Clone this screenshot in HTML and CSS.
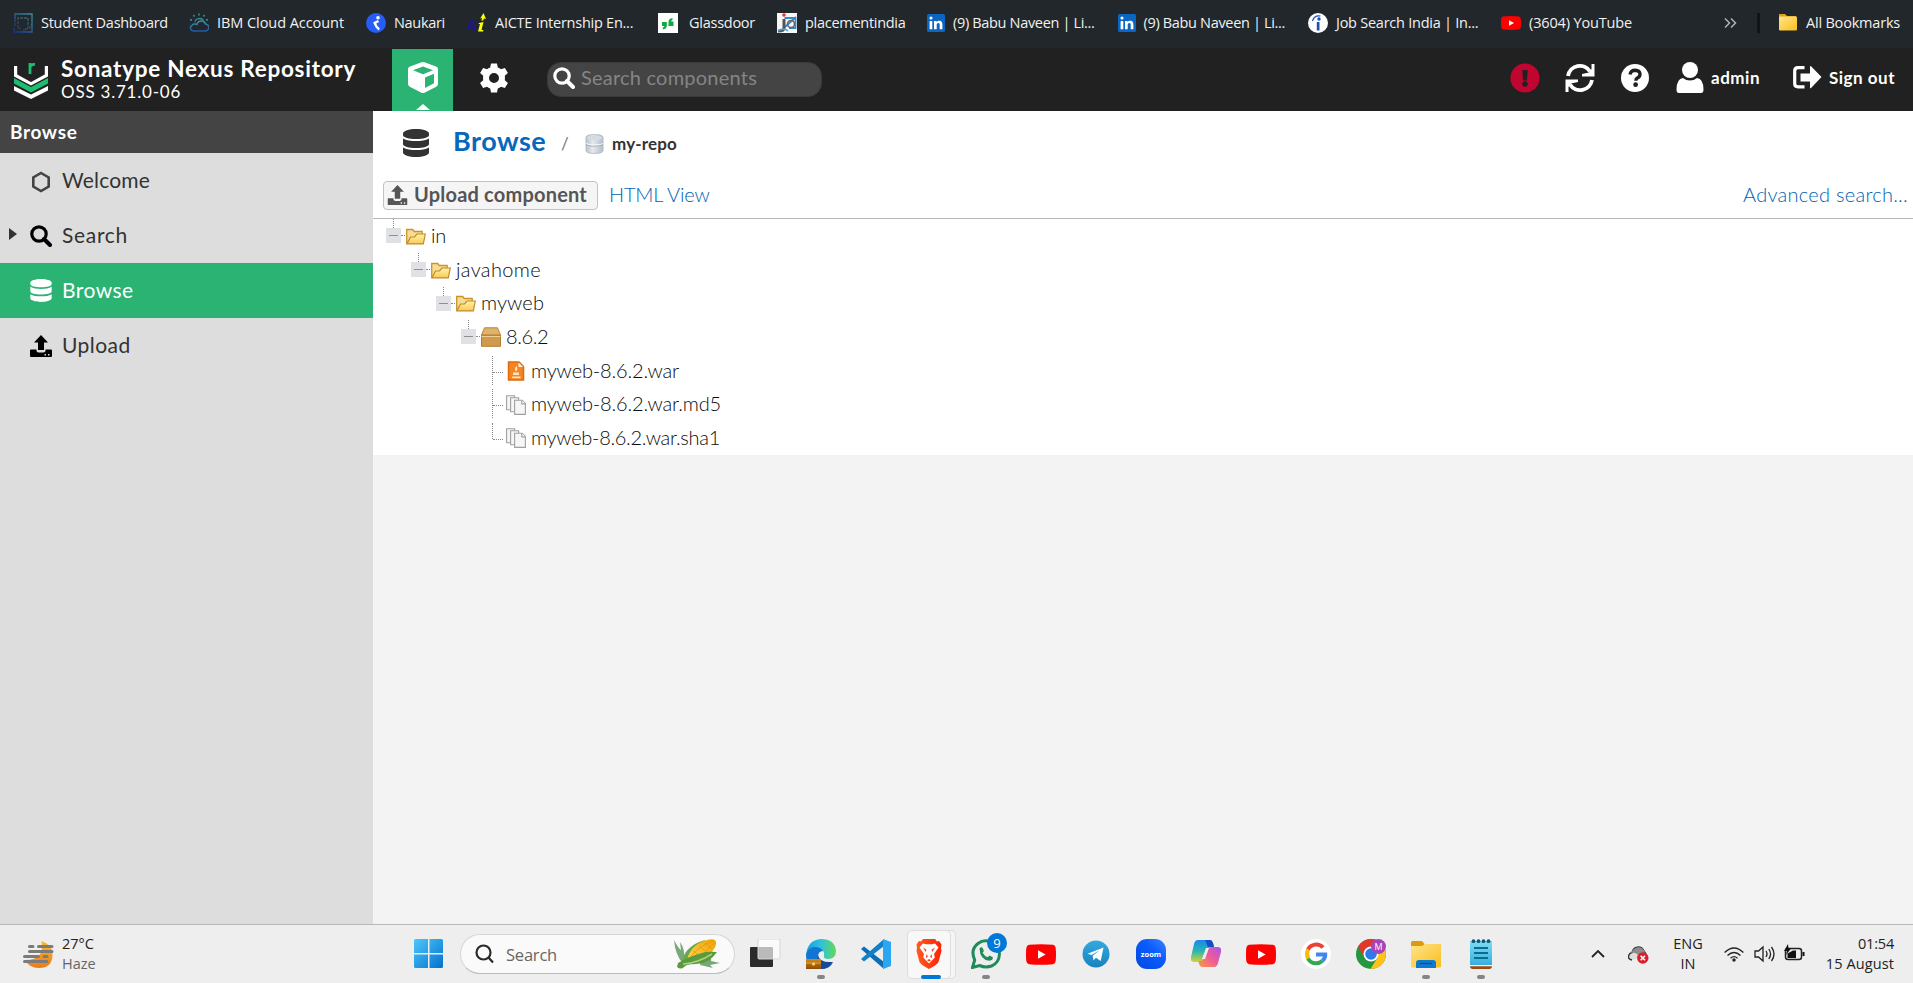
FILE: index.html
```html
<!DOCTYPE html>
<html lang="en">
<head>
<meta charset="utf-8">
<title>Browse - Sonatype Nexus Repository</title>
<link rel="stylesheet" href="styles.css">
</head>
<body>
<svg width="0" height="0" class="defs">
  <defs>
    <linearGradient id="gWin" x1="0" y1="0" x2="1" y2="1"><stop offset="0" stop-color="#4cc9fb"/><stop offset="1" stop-color="#0370ce"/></linearGradient>
    <linearGradient id="gFold" x1="0" y1="0" x2="1" y2="1"><stop offset="0" stop-color="#ffe58c"/><stop offset="1" stop-color="#f9bd1c"/></linearGradient>
    <linearGradient id="gSun" x1="0" y1="0" x2="0" y2="1"><stop offset="0" stop-color="#f8bd32"/><stop offset="1" stop-color="#ee7a17"/></linearGradient>
    <linearGradient id="gTree" x1="0" y1="0" x2="0" y2="1"><stop offset="0" stop-color="#fff3a8"/><stop offset="1" stop-color="#f8cb55"/></linearGradient>
    <linearGradient id="gSilver" x1="0" y1="0" x2="1" y2="0"><stop offset="0" stop-color="#b9c2cc"/><stop offset=".4" stop-color="#e6eaef"/><stop offset="1" stop-color="#b3bdc8"/></linearGradient>
    <linearGradient id="gEdge" x1="0" y1="0" x2="1" y2="0"><stop offset="0" stop-color="#1b9de2"/><stop offset=".5" stop-color="#2fc2dc"/><stop offset="1" stop-color="#62d957"/></linearGradient>
    <linearGradient id="gBrave" x1="0" y1="0" x2="1" y2="0"><stop offset="0" stop-color="#ff5a1f"/><stop offset="1" stop-color="#fb2408"/></linearGradient>
    <linearGradient id="gTele" x1="0" y1="0" x2="0" y2="1"><stop offset="0" stop-color="#33a9e0"/><stop offset="1" stop-color="#1982bd"/></linearGradient>
    <linearGradient id="gZoom" x1="0" y1="1" x2="1" y2="0"><stop offset="0" stop-color="#0047e0"/><stop offset=".6" stop-color="#0b5cff"/><stop offset="1" stop-color="#3c82ff"/></linearGradient>
    <linearGradient id="gCopA" x1="0" y1="0" x2="0" y2="1"><stop offset="0" stop-color="#1a86f0"/><stop offset=".5" stop-color="#27b7b0"/><stop offset="1" stop-color="#d8d330"/></linearGradient>
    <linearGradient id="gCopB" x1="1" y1="0" x2="0" y2="1"><stop offset="0" stop-color="#a957e8"/><stop offset=".5" stop-color="#ef5b98"/><stop offset="1" stop-color="#ff9a3c"/></linearGradient>
    <linearGradient id="gNote" x1="0" y1="0" x2="0" y2="1"><stop offset="0" stop-color="#7fdcf2"/><stop offset="1" stop-color="#38aede"/></linearGradient>
    <linearGradient id="gCorn" x1="0" y1="1" x2="1" y2="0"><stop offset="0" stop-color="#ffd95c"/><stop offset="1" stop-color="#f0a000"/></linearGradient>
    <linearGradient id="gStudent" x1="0" y1="1" x2="1" y2="0"><stop offset="0" stop-color="#1d2f8c"/><stop offset="1" stop-color="#3d8f96"/></linearGradient>
    <linearGradient id="gCloud" x1="0" y1="0" x2="0" y2="1"><stop offset="0" stop-color="#38949b"/><stop offset="1" stop-color="#2058b0"/></linearGradient>
    <linearGradient id="gCase" x1="0" y1="0" x2="0" y2="1"><stop offset="0" stop-color="#d18a22"/><stop offset="1" stop-color="#8d4a06"/></linearGradient>
  </defs>
  <symbol id="database" viewBox="0 0 26 28"><path d="M0 4.500C0 2 6 0 13 0s13 2 13 4.500v1.500c0 2.500-6 4-13 4S0 8.500 0 6z"/><path d="M0 9.500c3 2 8 2.600 13 2.600s10-.6 13-2.600V15c0 2.500-6 4-13 4S0 17.500 0 15z"/><path d="M0 18.500c3 2 8 2.600 13 2.600s10-.6 13-2.600v5c0 2.500-6 4.500-13 4.500S0 26 0 23.500z"/></symbol>
  <symbol id="magnifier" viewBox="0 0 22 22"><circle cx="9" cy="9" r="7.200" fill="none" stroke="currentColor" stroke-width="3.200"/><path d="M14 14l6 6" stroke="currentColor" stroke-width="4" stroke-linecap="round"/></symbol>
  <symbol id="upload" viewBox="0 0 22 22"><path d="M11 0l7 7.500h-4V15H8V7.500H4z"/><path fill-rule="evenodd" d="M0 15.500q0-1 1-1h5.500v1q0 2 2 2h5q2 0 2-2v-1H21q1 0 1 1V21q0 1-1 1H1q-1 0-1-1zM14.500 19v1.500H16V19zM18 19v1.500h1.500V19z"/></symbol>
  <symbol id="youtube" viewBox="0 0 30 21"><path fill="#f00" d="M3 .8Q15-.5 27 .8 29.300 1.300 29.700 4q.6 6.500 0 13-.4 2.700-2.700 3.200-12 1.300-24 0Q.7 19.700.3 17-.3 10.500.3 4 .7 1.300 3 .8z"/><path fill="#fff" d="M12 6.200l7.600 4.300L12 14.800z"/></symbol>
  <symbol id="linkedin" viewBox="0 0 18 18"><rect width="18" height="18" rx="1.500" fill="#0a66c2"/><path fill="#fff" d="M2.600 7h2.700v8.300H2.600zM4 2.500a1.550 1.550 0 1 1 0 3.100 1.550 1.550 0 0 1 0-3.100zM7 7h2.600v1.200C10.200 7.200 11.100 6.800 12.200 6.800c2.600 0 3.200 1.700 3.200 4v4.500h-2.700v-4c0-1 0-2.200-1.350-2.200S9.700 10.100 9.700 11.200v4.100H7z"/></symbol>
  <symbol id="folder-open" viewBox="0 0 20 17"><path d="M.7 15.500V1.500h6l1.500 2h8v4" fill="#f5dd95" stroke="#c99430" stroke-width="1.300"/><path d="M.9 15.900L4.500 9l4-.2L11 6h8.300l-2 9.900z" fill="url(#gTree)" stroke="#c48a2c" stroke-width="1.200"/></symbol>
  <symbol id="pages" viewBox="0 0 20 20"><g fill="#f6f6f6" stroke="#a0a0a0" stroke-width="1.100"><path d="M.6.8h8v14h-8z"/><path d="M4.600 2.800h8v14h-8z"/><path d="M8.600 5.300h7.600l3.200 3.200v10.900H8.600z"/><path d="M15.800 5.300v3.600h3.600" fill="#fff"/></g></symbol>
</svg>

<nav class="bookmarks">
  <a class="bm"><svg width="20" height="20" viewBox="0 0 20 20" fill="none" stroke="url(#gStudent)" stroke-width="1.300"><path d="M2 6V1h17v18H1v-4"/><path d="M2 6v7l-1 1M5 15V5h10v10M5 15l3 1M11 19v-3h5l3-5" stroke-dasharray="3 1" stroke-opacity=".7"/></svg><span class="w1">Student Dashboard</span></a>
  <a class="bm"><svg width="20" height="20" viewBox="0 0 20 20" fill="none" stroke="url(#gCloud)" stroke-width="1.500"><path d="M5 18h11a3.500 3.500 0 0 0 .5-7C15.500 7 9 6.500 8 11.500c-2-1-4.500-.5-5 1-2.500 1-2 5.500 2 5.500z"/><path d="M6 9.500c0-5 8-5 8.500-1"/><path d="M10 .5v2M4.500 2l1 1.500M1 6.500l2 .8M15.500 2l-1 1.500M19 6.500l-2 .8" stroke="#38949b"/></svg><span class="w2">IBM Cloud Account</span></a>
  <a class="bm"><svg width="20" height="20" viewBox="0 0 20 20"><circle cx="10" cy="10" r="10" fill="#275df5"/><circle cx="12" cy="4.700" r="1.800" fill="#fff"/><path d="M12.500 8L8.700 10q1.200 4 4.500 6.500" fill="none" stroke="#fff" stroke-width="2.500"/></svg><span class="w3">Naukari</span></a>
  <a class="bm"><svg width="20" height="20" viewBox="0 0 20 20"><path d="M0 18L4 8h2l2 10M2 14.500h5" stroke="#21178c" stroke-width="2" fill="none"/><path d="M16.500 0l2.500 6-2-.5-.7 2h-2l.9-2.500-2 .5zM12 10l4.500-1-2 8h2l-.5 1.500h-5l2-7.500h-1.500z" fill="#ff0"/></svg><span class="w4">AICTE Internship En...</span></a>
  <a class="bm wide"><svg width="20" height="20" viewBox="0 0 20 20"><path fill="#fff" d="M0 0h20v20H0z"/><path d="M4 9h4.800v3.500q0 3.500-4 4v-2q1.500-.3 1.500-1.500H4zM15.500 13h-5V9q0-3.500 4-4v2q-1.300.3-1.300 1.500h2.300z" fill="#0caa41"/></svg><span class="w5">Glassdoor</span></a>
  <a class="bm"><svg width="20" height="20" viewBox="0 0 20 20"><path fill="#f7f7f7" d="M0 0h20v20H0z"/><path d="M7.500 5h11v10H12M8 14L19 4" stroke="#318bd0" stroke-width="1.800" fill="none"/><path d="M7 6v9q0 3-6 3" stroke="#555" stroke-width="3" fill="none"/><path d="M1 18q6-4 10 0" stroke="#4ca2df" stroke-width="1.500" fill="none"/><circle cx="14" cy="11" r="3.500" fill="none" stroke="#666" stroke-width="1.600"/><circle cx="7" cy="2" r="1.800" fill="#e33"/></svg><span class="w6">placementindia</span></a>
  <a class="bm"><svg width="18" height="18"><use href="#linkedin"/></svg><span class="w7">(9) Babu Naveen | Li...</span></a>
  <a class="bm"><svg width="18" height="18"><use href="#linkedin"/></svg><span class="w7">(9) Babu Naveen | Li...</span></a>
  <a class="bm"><svg width="20" height="20" viewBox="0 0 20 20"><circle cx="10" cy="10" r="10" fill="#fff"/><path d="M8.800 9h2.700v8.500H8.800z" fill="#1f4fb4"/><circle cx="11" cy="6" r="1.700" fill="#1f4fb4"/><path d="M4.500 8Q6 2 12.500 3" fill="none" stroke="#1f4fb4" stroke-width="1.200"/></svg><span class="w9">Job Search India | In...</span></a>
  <a class="bm"><svg width="20" height="14"><use href="#youtube"/></svg><span class="w10">(3604) YouTube</span></a>
  <svg class="overflow" width="13" height="10" viewBox="0 0 13 10" fill="none" stroke="#aeb4b9" stroke-width="1.500"><path d="M1 .5L5.500 5 1 9.500M7 .5L11.500 5 7 9.500"/></svg>
  <i class="bm-sep"></i>
  <a class="bm last"><svg width="20" height="17" viewBox="0 0 20 17"><path d="M1 0h6l2 2h9v5H1z" fill="#dba21d"/><rect x="1" y="2.500" width="18" height="14" rx="1" fill="url(#gFold)"/></svg><span class="w11">All Bookmarks</span></a>
</nav>

<header class="top">
  <svg class="logo" width="34" height="37" viewBox="0 0 34 37"><path d="M1.600 4v9.500L17 21.800l15.400-8.300V4" fill="none" stroke="#fff" stroke-width="3.200"/><path d="M0 16l17 9 17-9v5.500l-17 9-17-9z" fill="#1bbd70"/><path d="M0 24l17 8.500L34 24v4.500L17 37 0 28.500z" fill="#fff"/><path d="M16 12V1M16 5q1-3 5-2.600" fill="none" stroke="#1bbd70" stroke-width="2.800"/></svg>
  <div class="brand"><b>Sonatype Nexus Repository</b><span>OSS 3.71.0-06</span></div>
  <a class="tab"><svg width="32" height="31" viewBox="0 0 32 31"><path fill-rule="evenodd" fill="#fff" d="M14.500.3q1.500-.6 3 0L29 4.500q2 .8 2 2.800v14.500q0 2-1.800 3L18 30.500q-2 1-4 0L2.800 24.800Q1 23.800 1 21.800V7.300q0-2 2-2.800zM6 8.200l10 4 10-4-10-3.700zM18 26l9-4.700v-9.600l-9 3.900z"/></svg><i></i></a>
  <svg class="gear" width="30" height="30" viewBox="0 0 30 30"><path fill="#fff" fill-rule="evenodd" d="M12 .5h6l.8 4q1.800.7 3.200 1.800l3.900-1.400 3 5.200-3.100 2.700q.3 2.200 0 4.400l3.100 2.700-3 5.200-3.900-1.400q-1.400 1.100-3.200 1.800l-.8 4h-6l-.8-4Q9.400 24.800 8 23.700l-3.900 1.400-3-5.200 3.100-2.700q-.3-2.200 0-4.400L1.100 10.100l3-5.200L8 6.300q1.400-1.100 3.200-1.800zM15 10a5 5 0 1 0 0 10 5 5 0 0 0 0-10z"/></svg>
  <div class="find"><svg width="22" height="22"><use href="#magnifier"/></svg><span>Search components</span></div>
  <div class="actions">
    <svg width="30" height="30" viewBox="0 0 30 30"><circle cx="15" cy="15" r="14.600" fill="#bf0530"/><path d="M12.300 7h5.400l-.7 10.500h-4z" fill="#212121"/><circle cx="15" cy="21" r="2.700" fill="#212121"/></svg>
    <svg class="refresh" width="30" height="30" viewBox="0 0 30 30"><path d="M3 13A12 12 0 0 1 25 8.500M27 17A12 12 0 0 1 5 21.500" fill="none" stroke="#fff" stroke-width="3.800"/><path d="M29.500 1v12.500H17V11l7-1.500L26.500 6V1zM.5 29V16.500H13V19l-7 1.500L3.500 24v5z" fill="#fff"/></svg>
    <svg class="help" width="28" height="28" viewBox="0 0 28 28"><circle cx="14" cy="14" r="14" fill="#fff"/><path d="M9 10.500q.8-4.200 5.200-4.200 4.600.2 4.800 3.900 0 2.400-2.300 3.600-1.900 1-1.900 3" fill="none" stroke="#212121" stroke-width="3.400"/><circle cx="14.600" cy="20.700" r="2.400" fill="#212121"/></svg>
    <svg class="user" width="28" height="31" viewBox="0 0 28 31" fill="#fff"><circle cx="14" cy="8" r="8"/><path d="M7 16q3 2.500 7 2.500t7-2.500q6.500 1 6.500 11.500 0 3.500-2.500 3.500H3q-2.500 0-2.500-3.500Q.5 17 7 16z"/></svg>
    <b class="admin">admin</b>
    <svg class="exit" width="29" height="23" viewBox="0 0 29 23" fill="#fff"><path d="M11.500 1.700H5Q1.700 1.700 1.700 5v12.500q0 3.300 3.300 3.300h6.500" fill="none" stroke="#fff" stroke-width="3.200"/><path d="M7.500 7.500H17V1q0-1.500 1.300-.5L28.500 11 18.300 21.700Q17 23 17 21.500V15.500H7.500z"/></svg>
    <b class="signout">Sign out</b>
  </div>
</header>

<div class="body">
  <aside>
    <h2><span>Browse</span></h2>
    <a class="item"><svg width="20" height="22" viewBox="0 0 20 22"><path d="M10 2l7.700 4.500v9L10 20l-7.700-4.500v-9z" fill="none" stroke="#444" stroke-width="2.600"/></svg><span class="n1">Welcome</span></a>
    <a class="item"><i class="caret"></i><svg width="22" height="22"><use href="#magnifier"/></svg><span class="n2">Search</span></a>
    <a class="item active"><svg width="22" height="23"><use href="#database"/></svg><span class="n3">Browse</span></a>
    <a class="item"><svg width="22" height="22"><use href="#upload"/></svg><span class="n4">Upload</span></a>
  </aside>
  <main>
    <div class="crumbs">
      <svg class="dbbig" width="26" height="28"><use href="#database"/></svg>
      <b class="c1">Browse</b><span class="slash">/</span>
      <svg class="dbsmall" width="19" height="20" viewBox="0 0 19 20"><path d="M1 3.500Q1 .6 9.500.6T18 3.500v13q0 2.900-8.500 2.900T1 16.500z" fill="url(#gSilver)" stroke="#b4bec8"/><ellipse cx="9.500" cy="4" rx="7.500" ry="2.400" fill="#d5dce4"/><path d="M1.500 10q0 2 8 2t8-2" fill="none" stroke="#98a4b0"/><path d="M1.500 9q0 2 8 2t8-2" fill="none" stroke="#fff"/></svg>
      <b class="c2">my-repo</b>
    </div>
    <div class="tools">
      <button><svg width="21" height="20" viewBox="0 0 22 22"><use href="#upload"/></svg><span>Upload component</span></button>
      <a class="html">HTML View</a><a class="adv">Advanced search...</a>
    </div>
    <ul class="tree">
      <li class="l0"><i class="exp"></i><svg width="20" height="17"><use href="#folder-open"/></svg><span class="r1">in</span></li>
      <li class="l1"><i class="exp"></i><svg width="20" height="17"><use href="#folder-open"/></svg><span class="r2">javahome</span></li>
      <li class="l2"><i class="exp"></i><svg width="20" height="17"><use href="#folder-open"/></svg><span class="r3">myweb</span></li>
      <li class="l3"><i class="exp"></i><svg width="20" height="20" viewBox="0 0 20 20"><path d="M.5 8L3.500.8h13l3 7.200z" fill="#e0b36a" stroke="#bd8437"/><path d="M.5 8.300h19v11H.5z" fill="#cf9a4e" stroke="#b57d34"/><path d="M.5 9.500h19" stroke="#efcf95"/></svg><span class="r4">8.6.2</span></li>
      <li class="l4"><i class="elbow"></i><svg width="20" height="20" viewBox="0 0 20 20"><path d="M2.500 1h10.500l4.500 4.500V19h-15z" fill="#f5861f" stroke="#e2690c" stroke-width="1.500"/><path d="M12.500 1.500v4.500h4.500z" fill="#fff3e3"/><path d="M6 15.500h8.500v1.800H6zM7 11.500h6V14H7zM10.500 5q-3 3-.5 5.500 2.500-2 .5-5.500" fill="#ffe3c2"/></svg><span class="r5">myweb-8.6.2.war</span></li>
      <li class="l4"><i class="elbow"></i><svg width="20" height="20"><use href="#pages"/></svg><span class="r5">myweb-8.6.2.war.md5</span></li>
      <li class="l4"><i class="elbow end"></i><svg width="20" height="20"><use href="#pages"/></svg><span class="r7">myweb-8.6.2.war.sha1</span></li>
    </ul>
  </main>
</div>

<footer>
  <div class="weather">
    <svg width="31" height="29" viewBox="0 0 31 29"><path d="M18.500 1Q29.500 4.500 29.500 14.500q0 13.500-13.500 13.500Q6 28 2.500 20 22 20 18.500 1z" fill="url(#gSun)"/><g stroke="#7d7b79" stroke-width="3" stroke-linecap="round"><path d="M6.500 6.500h3.500M15.500 6.500H29M6.500 11.500H29M1.500 16.500h14M21 16.500h3M1.500 21.500h22.500"/></g></svg>
    <p><span class="f1">27°C</span><span class="f2">Haze</span></p>
  </div>
  <svg class="start" width="30" height="30" viewBox="0 0 30 30"><path d="M1.500 0H14v14H0V1.500Q0 0 1.500 0zM15.500 0h12Q29 0 29 1.500V14H15.500zM0 15.500h14V29H1.500Q0 29 0 27.500zM15.500 15.500H29v12q0 1.500-1.500 1.500h-12z" fill="url(#gWin)"/></svg>
  <div class="pill">
    <svg width="20" height="20" viewBox="0 0 20 20" fill="none" stroke="#2b2b2b" stroke-width="2.200"><circle cx="8.500" cy="8.500" r="7"/><path d="M13.500 13.500l4.500 5"/></svg><span>Search</span>
    <svg class="corn" width="49" height="32" viewBox="0 0 49 32"><path d="M1 2q4 8 7 10l-1-8q5 7 4 16l-1 6Q2 16 1 2zM28 20q12-2 10 3l9 2-10 2 3 3-13-3z" fill="#79a878"/><path d="M8 28Q10 8 32 2L28 12 14 22z" fill="#69a84a"/><path d="M14 22Q18 6 34 2q8-2 9 2 1 4-5 11-8 9-22 9z" fill="url(#gCorn)"/><path d="M20 13l12 8M26 8l10 8M32 5l7 6M18 18q10-11 22-15M20 23q12-7 20-17" stroke="#e39a08" stroke-width=".8" fill="none"/><path d="M5 25q14-8 24-10 5-2 15-1-8 12-21 12-10 0-12 3-3 3-7 0z" fill="#589a3d"/><path d="M10 26q15-1 29-10" stroke="#a9cf79" stroke-width="1.500" fill="none"/></svg>
  </div>
  <div class="apps">
    <span><svg width="32" height="30" viewBox="0 0 32 30"><rect y="8" width="23" height="20" rx="1" fill="#2b2b2b"/><rect x="8" y="0" width="22" height="20" rx="1" fill="#fff" fill-opacity=".68" stroke="#d5d5d5"/></svg></span>
    <span class="run"><svg width="30" height="30" viewBox="0 0 30 30"><path d="M0 17Q1 1 15 0q14 0 15 12 0 8-8 8-5 0-4-4 1-4-4-6-8-2-14 7z" fill="url(#gEdge)"/><path d="M0 16Q2 8 9 8q6 0 8 4-5 0-5 6 0 8 9 9 3 0 6-3-5 7-13 6Q0 29 0 16z" fill="#1176d3"/><path d="M12 16q1 8 15 7-4 7-12 7-5-4-3-14z" fill="#174b98"/><path d="M0 20h15v10H0z" fill="url(#gCase)"/><path d="M0 24h15" stroke="#e5a637"/><circle cx="7.500" cy="25" r="1.500" fill="#ffd668"/></svg></span>
    <span><svg width="30" height="30" viewBox="0 0 30 30"><path d="M0 10l3-2.500L23 23v7z" fill="#0b6fb5"/><path d="M0 20l3 2.500L23 7V0z" fill="#1281c8"/><path d="M22 0l8 3v24l-8 3z" fill="#2aa7f0"/></svg></span>
    <span class="focus"><em><svg width="26" height="30" viewBox="0 0 26 30"><path d="M7 0h12l2 2.500 2-.5 2.500 3.500L25 9l.5 3-3 11Q21 26 13 30 5 26 3.500 23L.5 12 1 9 .5 5.500 3 2l2 .5z" fill="url(#gBrave)"/><path fill="#fff" fill-rule="evenodd" d="M7 4.500l3 .8h6l3-.8 3.500 4-4.500 6.500.8 3.500L13 24.500 7.200 18.500 8 15 3.500 8.500zM7 8.500l3.500 2.300-.8 2.200zM19 8.500l-3.500 2.300.8 2.200zM10.300 15l1.700 2.800-2 1.200zM15.700 15L14 17.800l2 1.200zM13 20l-2 1.200 2 1.300 2-1.300z"/></svg></em></span>
    <span class="run"><svg width="30" height="30" viewBox="0 0 30 30"><path d="M1.500 28.500L3.700 21Q-1 10.500 7 4.500q6-4.500 13-1.500 8 4 8.500 12-.5 9-8 12-6 2-12-.5z" fill="none" stroke="#1f8b5b" stroke-width="3"/><path d="M8.500 9.500q2-2.500 3.500.2l.8 2q0 1-1.200 2 2 3.500 5 4.600 1.300-2 2.300-1.500l3 1.500q.2 3-3.400 3.500Q9 21 8.500 9.500z" fill="#1f8b5b"/></svg><b>9</b></span>
    <span><svg width="30" height="21"><use href="#youtube"/></svg></span>
    <span><svg width="28" height="28" viewBox="0 0 28 28"><circle cx="14" cy="14" r="13.500" fill="url(#gTele)"/><path d="M5.500 13.800L21.500 7.500 18.700 21 14 17.700l-2.500 2.500-.8-4.500L18 10l-8.500 5z" fill="#fff"/></svg></span>
    <span><svg width="30" height="30" viewBox="0 0 30 30"><rect width="30" height="30" rx="11" fill="url(#gZoom)"/><text x="15" y="17.500" text-anchor="middle" class="zoomtxt">zoom</text></svg></span>
    <span><svg width="30" height="28" viewBox="0 0 30 28"><path d="M7 0h12q2 0 3 3l1 4h-3q-3 0-4 4l-3 8q-1 3-4 3H3q-4 0-3-5L3 4q1-4 4-4z" fill="url(#gCopA)"/><path d="M14 0h5q2 0 3 3l1 4h-6z" fill="#154fc4"/><path d="M23 27H11q-2 0-3-3l-.5-3h2q3 0 4-4l3-7q1-3 4-3H27q4 0 3 5l-3 11q-1 4-4 4z" fill="url(#gCopB)"/><path d="M15 8h3l-4 11h-3z" fill="#eee"/></svg></span>
    <span><svg width="30" height="21"><use href="#youtube"/></svg></span>
    <span><svg width="30" height="30" viewBox="0 0 30 30"><circle cx="15" cy="15" r="15" fill="#fff"/><g fill="none" stroke-width="4"><path d="M22 8.500A9.300 9.300 0 0 0 7 10.500" stroke="#ea4335"/><path d="M7 10.500q-2 4.500 0 9" stroke="#fbbc05"/><path d="M6.900 19.500Q10 24.500 15 24.300q3.800 0 6.500-2.500" stroke="#34a853"/><path d="M21.500 21.800q2.700-2.500 2.700-6.300H15" stroke="#4285f4"/></g></svg></span>
    <span><svg width="30" height="30" viewBox="0 0 30 30"><circle cx="15" cy="15" r="15" fill="#23963f"/><path d="M2 7.500Q7 0 15 0q9 0 13 7.500H15l-6.500 11z" fill="#e2382b"/><path d="M28 7.500Q32 15 28 22.500 24 30 14.500 30l7-11.500L22 7.500z" fill="#fcc419"/><circle cx="15" cy="15" r="7.500" fill="#fff"/><circle cx="15" cy="15" r="5.800" fill="#2d7bea"/><circle cx="22.500" cy="7.500" r="7.500" fill="#a844ba"/><text x="22.500" y="11" text-anchor="middle" class="mtxt">M</text></svg></span>
    <span class="run"><svg width="30" height="27" viewBox="0 0 30 27"><path d="M0 1.500Q0 0 1.500 0H11l2.500 3V8H0z" fill="#dc9a0c"/><path d="M0 5h11l3-2h16v22q0 1.500-1.500 1.500h-27Q0 26.500 0 25z" fill="url(#gFold)"/><path d="M5 27v-5q0-3 3-3h14q3 0 3 3v5z" fill="#0e78cc"/><path d="M9 22.500h12" stroke="#0a4b89" stroke-width="1.200"/></svg></span>
    <span class="run"><svg width="22" height="30" viewBox="0 0 22 30"><path d="M0 2h22v24H0z" fill="url(#gNote)"/><g fill="#0d5876"><circle cx="3.500" cy="2.200" r="1.900"/><circle cx="8.500" cy="2.200" r="1.900"/><circle cx="13.500" cy="2.200" r="1.900"/><circle cx="18.500" cy="2.200" r="1.900"/></g><path d="M4 9h14M4 14h14M4 19h14" stroke="#0a6b93" stroke-width="2"/><path d="M0 26h22v1.500H0z" fill="#fff"/><path d="M0 27.300h22q0 2.700-2 2.700H2q-2 0-2-2.700z" fill="#9a4a13"/></svg></span>
  </div>
  <div class="tray">
    <svg class="chev" width="14" height="8" viewBox="0 0 14 8"><path d="M1 7l6-6 6 6" fill="none" stroke="#222" stroke-width="1.800"/></svg>
    <svg class="cloud" width="21" height="18" viewBox="0 0 21 18"><path d="M4 14Q-.5 13 .7 9.500 1.500 7 4 6.500 5.500 1 10.500 1 14 1 16 5q1.500 2 2 4" fill="#ddd" stroke="#333" stroke-width="1.500"/><path d="M3 7q6-1 9 5l5-6Q14 0 9 1.500 5 2.500 3 7z" fill="#8d8d8d"/><circle cx="14.800" cy="12" r="5.700" fill="#dc1d2c"/><path d="M12.600 9.800l4.400 4.400M17 9.800l-4.400 4.400" stroke="#fff" stroke-width="1.600"/></svg>
    <p class="lang"><span class="f3">ENG</span><span class="f4">IN</span></p>
    <svg class="wifi" width="20" height="15" viewBox="0 0 20 15" fill="none" stroke="#222" stroke-width="1.300"><path d="M.6 5.500q9.400-9 18.800 0M3.500 8.500q6.500-6 13 0M6.500 11.200q3.500-3 7 0"/><circle cx="10" cy="13" r="1.100" fill="#222"/></svg>
    <svg class="sound" width="21" height="18" viewBox="0 0 21 18" fill="none" stroke="#222" stroke-width="1.300"><path d="M1 6h3.500L9 2v14l-4.500-4H1z"/><path d="M12 6q2 3 0 6M14.800 4q3.500 5 0 10M17.500 2q5 7 0 14"/></svg>
    <svg class="batt" width="21" height="17" viewBox="0 0 21 17"><rect x="1.500" y="4.500" width="16" height="11" rx="2.500" fill="none" stroke="#222" stroke-width="1.500"/><path d="M3.500 14V9.500L9 6.500h3V14zM4 0L0 7h3l-1 4 5-6.500H4.500zM18.500 8h2v4h-2z" fill="#111"/></svg>
    <p class="clock"><span class="f5">01:54</span><span class="f6">15 August</span></p>
  </div>
</footer>
</body>
</html>
```
FILE: styles.css
```css
* { box-sizing: border-box; }
body { margin: 0; width: 1913px; height: 983px; overflow: hidden; display: flex; flex-direction: column; font-family: Lato, "Open Sans", sans-serif; color: #333; background: #f3f3f3; }
svg { display: block; flex: none; }
svg.defs { position: absolute; }
span, b { white-space: nowrap; flex: none; }

/* Bookmarks bar */
.bookmarks { height: 48px; background: #22272b; display: flex; align-items: center; padding: 0 0 3px 13px; font: 14.500px "Open Sans", "Noto Sans", sans-serif; color: #f1f1f1; }
.bm { display: flex; flex: none; align-items: center; gap: 8px; margin-right: 22px; }
.bm.wide { gap: 11px; margin-left: 3px; }
.bm.last { margin-right: 13px; }
.bm-sep { width: 3px; height: 20px; background: #111418; margin: 0 18px 0 20px; }
.overflow { margin-left: auto; }
.w1 { width: 126px; letter-spacing: -.28px; }
.w2 { width: 127px; letter-spacing: -.06px; }
.w3 { width: 51px; letter-spacing: -.31px; }
.w4 { width: 138px; letter-spacing: -.25px; }
.w5 { width: 66px; letter-spacing: -.26px; }
.w6 { width: 100px; letter-spacing: -.28px; }
.w7 { width: 142.500px; letter-spacing: -.33px; }
.w9 { width: 143px; letter-spacing: -.25px; }
.w10 { width: 103px; letter-spacing: -.15px; }
.w11 { width: 94px; letter-spacing: -.2px; }

/* Application header */
.top { height: 63px; background: #212121; display: flex; align-items: center; color: #fff; }
.logo { margin: 1px 13px 0 14px; }
.brand { width: 331px; display: flex; flex-direction: column; line-height: 23px; margin-top: 1px; }
.brand b { font-size: 22.500px; letter-spacing: .73px; }
.brand span { font-size: 17px; letter-spacing: .78px; }
.tab { width: 61px; height: 62px; align-self: flex-end; background: #2ab373; display: flex; flex-direction: column; align-items: center; justify-content: space-between; padding: 13px 0 1px; }
.tab i { border: 7px solid transparent; border-top: 0; border-bottom: 6px solid #fff; }
.gear { margin: -4px 38px 0 26px; }
.find { width: 275px; height: 35px; border-radius: 14px; background: #444; border: 1px solid #3a3a3a; display: flex; align-items: center; gap: 6px; padding: 0 5px; font-size: 20px; color: #858585; }
.find svg { color: #fff; margin-top: -4px; }
.find span { margin-top: -5px; letter-spacing: .22px; }
.actions { display: flex; align-items: center; margin-left: auto; padding: 0 17px 4px 0; font-size: 17px; }
.refresh { margin-left: 25px; }
.help { margin-left: 26px; }
.user { margin: 0 7px 0 27px; }
.admin { width: 50px; letter-spacing: .52px; }
.exit { margin: 0 7px 0 32px; }
.signout { width: 67px; letter-spacing: .5px; }

/* Sidebar */
.body { height: 813px; display: flex; }
aside { width: 373px; background: #ddd; }
h2 { margin: 0; height: 42px; background: #444; color: #fff; font-size: 19px; line-height: 42px; padding-left: 10px; letter-spacing: .65px; }
.item { height: 55px; display: flex; align-items: center; padding-left: 30px; font-size: 21px; position: relative; }
.item svg { color: #000; }
.item span { margin: -2px 0 0 10px; }
.item svg[width="20"] { margin: 2px 1px 0; }
.n1 { letter-spacing: .2px; }
.n2 { letter-spacing: .7px; }
.n3, .n4 { letter-spacing: .45px; }
.active { background: #2ab373; color: #fff; }
.active svg { fill: #fff; }
.caret { position: absolute; left: 9px; top: 20px; border: 6px solid transparent; border-left: 8px solid #333; border-right: 0; }

/* Content */
main { flex: 1; }
.crumbs { height: 68px; background: #fff; display: flex; align-items: center; padding: 0 0 4px 30px; }
.dbbig { fill: #333; margin-top: -1px; }
.c1 { font-size: 27px; color: #0768bb; width: 93px; margin: -5px 0 0 24px; letter-spacing: .5px; }
.slash { width: 6px; margin: 0 18px 0 15px; color: #777; font-size: 17px; }
.dbsmall { margin: 1px 8px 0 0; }
.c2 { font-size: 17px; letter-spacing: .16px; }
.tools { height: 40px; background: #fff; border-bottom: 1px solid #b8b8b8; display: flex; align-items: flex-start; padding: 2px 5px 0 10px; font-size: 20px; color: #0062b4; }
.tools button { width: 215px; height: 29px; border: 1px solid #c2c2c2; border-radius: 4px; background: #f5f5f5; display: flex; align-items: center; padding: 0 3px; gap: 6px; font: bold 20px Lato, sans-serif; color: #555; fill: #555; }
.tools button svg { margin-top: -2px; }
.tools button span { margin-top: -3px; letter-spacing: .2px; }
.tools a { line-height: 27px; font-weight: 300; }
.html { margin-left: 11px; letter-spacing: -.2px; }
.adv { margin-left: auto; letter-spacing: .27px; }
.tree { list-style: none; margin: 0; padding: 0 0 0 12px; height: 236px; background: #fff; font-size: 20px; font-weight: 300; color: #0c0c0c; }
.tree li { height: 33.700px; display: flex; align-items: center; }
.tree span { margin: -2px 0 0 5px; }
.tree .r1 { letter-spacing: -.3px; }
.tree .r2 { letter-spacing: .35px; }
.tree .r3 { letter-spacing: .09px; }
.tree .r4 { letter-spacing: -.4px; }
.tree .r5 { letter-spacing: -.15px; }
.tree .r7 { letter-spacing: -.3px; }
.l1 { padding-left: 25px; }
.l2 { padding-left: 50px; }
.l3 { padding-left: 75px; }
.l4 { padding-left: 100px; }
.tree svg { margin-top: 1px; }
.exp { width: 15px; height: 15px; margin: 0 5px 0 1px; background: linear-gradient(#909090, #909090) center / 9px 1px no-repeat #dfe1e5; position: relative; }
.exp::before { content: ""; position: absolute; left: 7px; top: -9px; height: 9px; border-left: 1px dotted #888; }
.exp::after { content: ""; position: absolute; left: 15px; top: 7px; width: 4px; border-top: 1px dotted #888; }
.elbow { width: 21px; height: 30px; position: relative; }
.elbow::before { content: ""; position: absolute; left: 7px; top: 0; height: 29px; border-left: 1px dotted #888; }
.elbow.end::before { height: 16px; }
.elbow::after { content: ""; position: absolute; left: 8px; top: 16px; width: 10px; border-top: 1px dotted #888; }

/* Taskbar */
footer { height: 59px; background: #eee; border-top: 1px solid #b9b9b9; display: flex; align-items: center; font-family: "Open Sans", "Noto Sans", sans-serif; }
footer p { margin: 0; display: flex; flex-direction: column; font-size: 14.500px; line-height: 20px; color: #222; }
.weather { display: flex; flex: none; gap: 8px; width: 414px; padding-left: 23px; align-items: center; }
.f2 { color: #666; }
.f5 { letter-spacing: -.2px; }
.f6 { letter-spacing: .1px; }
.pill { width: 275px; height: 40px; border: 1px solid #d6d6d6; border-bottom-color: #bbb; border-radius: 20px; background: #fafafa; margin-left: 16px; padding: 0 12px 0 14px; display: flex; align-items: center; font-size: 16.500px; color: #666; }
.pill span { margin-left: 11px; letter-spacing: -.21px; }
.corn { margin-left: auto; }
.apps { display: flex; margin-left: 3px; }
.apps > span { width: 55px; height: 58px; display: flex; align-items: center; justify-content: center; position: relative; }
.run::after { content: ""; position: absolute; left: 24px; top: 50px; width: 8px; height: 4px; border-radius: 2px; background: #858585; }
.focus em { width: 44px; height: 49px; margin: 0 0 0 -3px; background: #f8f8f8; border: 1px solid #ddd; border-radius: 5px; box-shadow: 5px 0 0 -1px #f5f5f5, 5px 0 0 #ddd; display: flex; align-items: center; justify-content: center; }
.focus::after { content: ""; position: absolute; left: 18px; top: 50px; width: 20px; height: 4px; border-radius: 2px; background: #0078d7; }
.run b { position: absolute; left: 29px; top: 8px; width: 20px; height: 20px; border-radius: 50%; background: #0078d7; color: #fff; font: 13px/20px "Open Sans"; text-align: center; }
.zoomtxt { font: bold 7.500px "Open Sans"; fill: #fff; }
.mtxt { font: 9px "Open Sans"; fill: #fff; }
.tray { margin-left: auto; display: flex; align-items: center; padding-right: 19px; }
.cloud { margin: 2px 24px 0 23px; }
.lang { width: 30px; align-items: center; }
.wifi { margin: 0 10px 0 21px; }
.batt { margin: -3px 0 0 9px; }
.clock { width: 89px; align-items: flex-end; }
```
